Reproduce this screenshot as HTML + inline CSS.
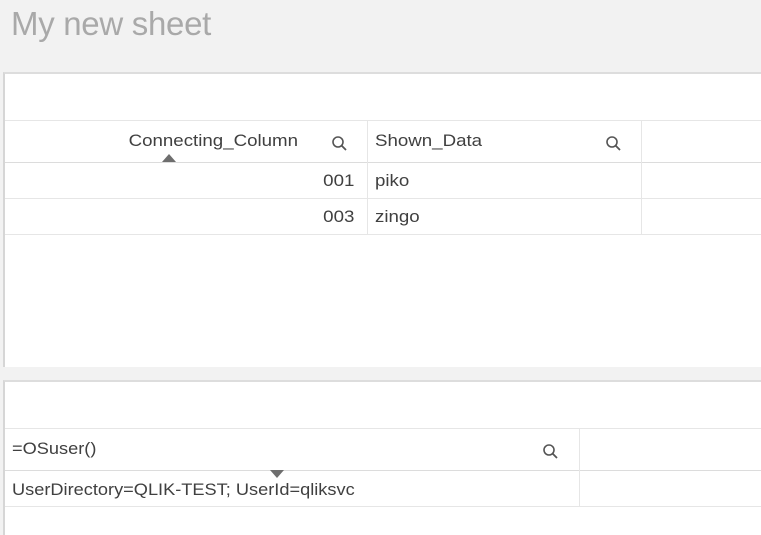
<!DOCTYPE html>
<html><head><style>
body{margin:0;width:761px;height:533px;background:#f2f2f2;position:relative;overflow:hidden;font-family:"Liberation Sans",sans-serif;color:#404040}
.t{position:absolute;left:11px;top:5px;font-size:33px;color:#a9a9a9;letter-spacing:-0.3px}
.p{position:absolute;left:3px;right:0;background:#fff;border-top:2px solid #ddd;border-left:2px solid #d6d6d6}
.h{position:absolute;height:1px;background:#e6e6e6;left:0;right:0}
.v{position:absolute;width:1px;background:#e6e6e6}
.x{position:absolute;font-size:17px;white-space:nowrap;transform:scaleX(1.1);transform-origin:left}
.y{position:absolute;font-size:17px;white-space:nowrap;transform:scaleX(1.07);transform-origin:left}
.r{position:absolute;font-size:17px;white-space:nowrap;transform:scaleX(1.1);transform-origin:right;text-align:right}
svg{position:absolute}
</style></head><body>
<div class="t">My new sheet</div>
<div class="p" style="top:72px;height:293px">
 <div class="h" style="top:46px"></div>
 <div class="h" style="top:88px;background:#dcdcdc"></div>
 <div class="h" style="top:124px"></div>
 <div class="h" style="top:160px"></div>
 <div class="v" style="left:362px;top:46px;height:114px"></div>
 <div class="v" style="left:636px;top:46px;height:114px"></div>
 <div class="r" style="right:463px;top:57px">Connecting_Column</div>
 <svg style="left:326px;top:61px" width="18" height="18" viewBox="0 0 18 18"><circle cx="7" cy="7" r="5" fill="none" stroke="#555" stroke-width="1.6"/><path d="M10.5 10.5L15 15" stroke="#555" stroke-width="1.8"/></svg>
 <div class="x" style="left:370px;top:57px">Shown_Data</div>
 <svg style="left:600px;top:61px" width="18" height="18" viewBox="0 0 18 18"><circle cx="7" cy="7" r="5" fill="none" stroke="#555" stroke-width="1.6"/><path d="M10.5 10.5L15 15" stroke="#555" stroke-width="1.8"/></svg>
 <svg style="left:157px;top:80px" width="14" height="9"><path d="M0 8L7 0L14 8Z" fill="#6e6e6e"/></svg>
 <div class="r" style="right:407px;top:97px">001</div>
 <div class="x" style="left:370px;top:97px">piko</div>
 <div class="r" style="right:407px;top:133px">003</div>
 <div class="x" style="left:370px;top:133px">zingo</div>
</div>
<div class="p" style="top:380px;height:153px">
 <div class="h" style="top:46px"></div>
 <div class="h" style="top:88px;background:#dcdcdc"></div>
 <div class="h" style="top:124px"></div>
 <div class="v" style="left:574px;top:46px;height:78px"></div>
 <div class="y" style="left:7px;top:57px">=OSuser()</div>
 <svg style="left:537px;top:61px" width="18" height="18" viewBox="0 0 18 18"><circle cx="7" cy="7" r="5" fill="none" stroke="#555" stroke-width="1.6"/><path d="M10.5 10.5L15 15" stroke="#555" stroke-width="1.8"/></svg>
 <svg style="left:265px;top:88px" width="14" height="9"><path d="M0 0L14 0L7 8Z" fill="#6e6e6e"/></svg>
 <div class="y" style="left:7px;top:98px">UserDirectory=QLIK-TEST; UserId=qliksvc</div>
</div>
</body></html>
